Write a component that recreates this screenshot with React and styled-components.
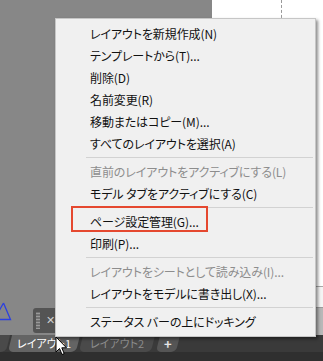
import React from 'react';
import styled, { createGlobalStyle } from 'styled-components';

const GlobalStyle = createGlobalStyle`
    html, body {
        margin: 0;
        padding: 0;
        background: #878787;
    }
    body {
        font-family: "Noto Sans CJK JP", "Noto Sans", sans-serif;
    }
`;

const Screen = styled.div`
    position: relative;
    width: 323px;
    height: 361px;
    overflow: hidden;
    display: grid;
    grid-template-rows: 335px 1fr;
    font-family: "Noto Sans CJK JP", "Noto Sans", sans-serif;
    font-feature-settings: "palt";
`;

const Canvas = styled.div`
    position: relative;
    display: grid;
    grid-template-columns: 212px 1fr;
    background: #878787;
`;

const ModelSpace = styled.div`
    background: #878787;
`;

const Paper = styled.div`
    display: grid;
    grid-template-rows: 287px 21px 1fr;
`;

const Sheet = styled.div`
    background: #ffffff;
    padding-left: 69px;
    border-bottom: 1px solid #a8a8a8;
`;

const DashLine = styled.div`
    width: 0;
    height: 100%;
    border-left: 1px dashed #9a9a9a;
`;

const SheetMargin = styled.div`
    background: #f4f4f4;
    border-bottom: 1px solid #9c9c9c;
`;

const SheetShade = styled.div`
    background: #b8b8b8;
`;

const Triangle = styled.svg`
    position: absolute;
    left: 0;
    top: 302px;
`;

const Palette = styled.div`
    position: absolute;
    left: 33px;
    top: 308px;
    width: 30px;
    height: 25px;
    border-radius: 3px;
    background: #545454;
    display: flex;
    align-items: center;
    gap: 6px;
    padding-left: 3px;
    box-sizing: border-box;
`;

const Grip = styled.div`
    width: 4px;
    height: 17px;
    background-image: radial-gradient(circle, #9a9a9a 1px, transparent 1.2px);
    background-size: 2px 3px;
`;

const Close = styled.span`
    color: #d0d0d0;
    font-family: "DejaVu Sans", sans-serif;
    font-size: 11px;
    line-height: 1;
`;

const TabBar = styled.div`
    display: flex;
    align-items: flex-start;
    background: linear-gradient(#3a3a3a 0, #3a3a3a 17px, #2f2f2f 17px);
    overflow: hidden;
`;

const Tab = styled.div`
    height: 17px;
    width: ${({ $width }) => $width}px;
    flex: none;
    margin-left: ${({ $offset }) => $offset || 0}px;
    background: ${({ $bg }) => $bg};
    color: ${({ $fg }) => $fg};
    font-size: 11px;
    border-radius: 0 0 5px 5px;
    transform: skewX(-14deg);
    display: flex;
    align-items: center;
    justify-content: center;
    white-space: nowrap;
`;

const TabLabel = styled.span`
    display: inline-block;
    transform: skewX(14deg);
    line-height: 1;
    font-weight: ${({ $bold }) => ($bold ? 700 : 400)};
    font-size: ${({ $size }) => $size || 11}px;
`;

const Menu = styled.div`
    position: absolute;
    left: 55px;
    top: 18px;
    width: 261px;
    box-sizing: border-box;
    padding: 3px 1px 4px 0;
    background: #f0f0f0;
    border: 1px solid #c6c6c6;
    box-shadow: 2px 2px 3px rgba(0, 0, 0, 0.45);
    display: flex;
    flex-direction: column;
`;

const Item = styled.div`
    position: relative;
    height: 22px;
    padding-left: 34px;
    display: flex;
    align-items: center;
    font-size: 12px;
    letter-spacing: -0.1px;
    color: ${({ $disabled }) => ($disabled ? '#8d8d8d' : '#111111')};
    white-space: nowrap;
`;

const Separator = styled.div`
    height: 1px;
    margin: 3px 1px 2px 30px;
    background: #d2d2d2;
`;

const Highlight = styled.div`
    position: absolute;
    left: 15px;
    top: -4px;
    width: 137px;
    height: 26px;
    box-sizing: border-box;
    border: 2px solid #e5482f;
    pointer-events: none;
`;

const Cursor = styled.svg`
    position: absolute;
    left: 55px;
    top: 336px;
`;

const items = [
    { label: 'レイアウトを新規作成(N)' },
    { label: 'テンプレートから(T)...' },
    { label: '削除(D)' },
    { label: '名前変更(R)' },
    { label: '移動またはコピー(M)...' },
    { label: 'すべてのレイアウトを選択(A)' },
    { sep: true },
    { label: '直前のレイアウトをアクティブにする(L)', disabled: true },
    { label: 'モデル タブをアクティブにする(C)' },
    { sep: true },
    { label: 'ページ設定管理(G)...', marked: true },
    { label: '印刷(P)...' },
    { sep: true },
    { label: 'レイアウトをシートとして読み込み(I)...', disabled: true },
    { label: 'レイアウトをモデルに書き出し(X)...' },
    { sep: true },
    { label: 'ステータス バーの上にドッキング' },
];

const tabs = [
    { label: '', width: 12, offset: -4, bg: '#4a4a4a', fg: '#8e8e8e' },
    { label: 'レイアウト1', width: 68, offset: 2, bg: '#646464', fg: '#ffffff' },
    { label: 'レイアウト2', width: 72, offset: 3, bg: '#4a4a4a', fg: '#8e8e8e' },
    { label: '+', width: 20, offset: 5, bg: '#555555', fg: '#e6e6e6', bold: true, size: 13 },
];

const App = () => {
    return (
        <Screen>
            <GlobalStyle />
            <Canvas>
                <ModelSpace />
                <Paper>
                    <Sheet>
                        <DashLine />
                    </Sheet>
                    <SheetMargin />
                    <SheetShade />
                </Paper>
                <Triangle width="14" height="20" viewBox="0 0 14 20">
                    <path d="M3.5 1 L10.5 17.5 L-1 17.5 M3.5 1 L-1 9" fill="none" stroke="#2b3fe0" strokeWidth="1.3" />
                </Triangle>
                <Palette>
                    <Grip />
                    <Close>✕</Close>
                </Palette>
            </Canvas>

            <TabBar>
                {tabs.map((t, i) => (
                    <Tab key={i} $width={t.width} $offset={t.offset} $bg={t.bg} $fg={t.fg}>
                        <TabLabel $bold={t.bold} $size={t.size}>{t.label}</TabLabel>
                    </Tab>
                ))}
            </TabBar>

            <Menu>
                {items.map((it, i) =>
                    it.sep ? (
                        <Separator key={i} />
                    ) : (
                        <Item key={i} $disabled={it.disabled}>
                            {it.label}
                            {it.marked && <Highlight />}
                        </Item>
                    )
                )}
            </Menu>

            <Cursor width="13" height="20" viewBox="0 0 13 20">
                <path d="M1 1 L1 16 L4.5 12.5 L7 18.5 L9.2 17.6 L6.8 11.8 L11.5 11.8 Z" fill="#ffffff" stroke="#000000" strokeWidth="1" strokeLinejoin="round" />
            </Cursor>
        </Screen>
    );
};

export default App;
